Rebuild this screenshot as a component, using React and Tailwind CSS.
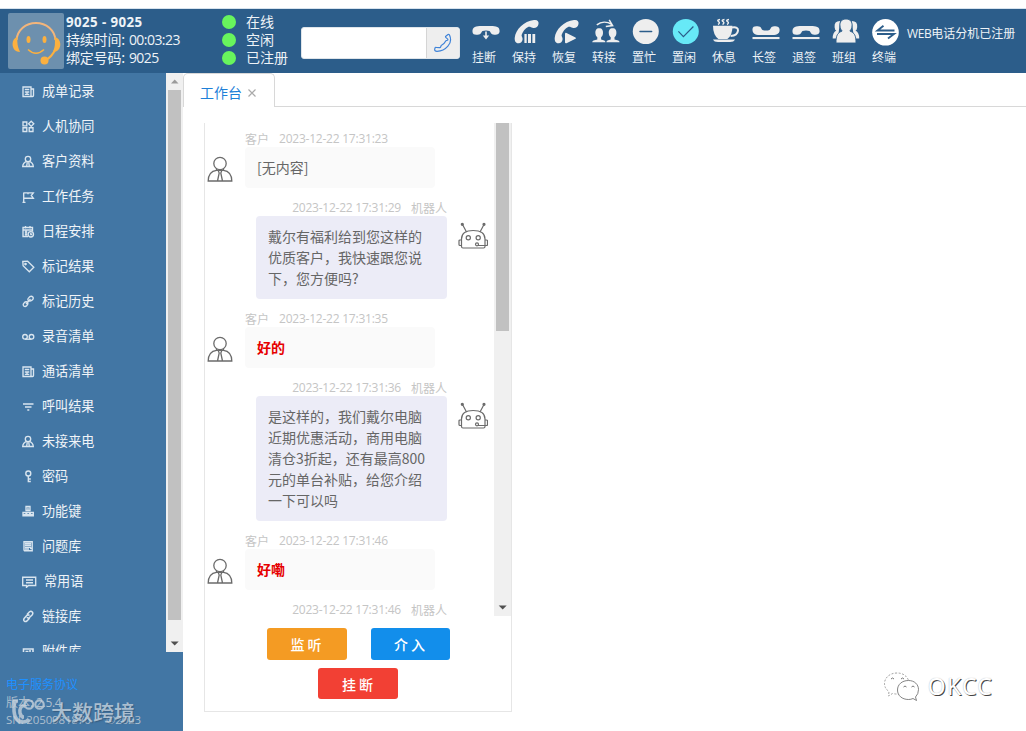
import React from "react";

const Arch = "M0.5 14 C0 7 7 8 14 8 S28 7 27.6 13.5 C27.4 16.8 24 17 21 16.4 C18.5 16 19 14 17.5 13 C15.5 12.2 12.5 12.2 10.5 13 C9 14 9.5 16 7 16.4 C4 17 0.7 17 .5 14Z";
const Receiver = "M22 2 C25.500 1.500 27 3.500 26.500 6 C26 9 23.500 10.500 20.500 9.800 C19 9.300 18 8.300 16.500 8.800 C13 10.500 10.500 14 9.600 17 C9.300 18.600 10.800 19.200 10.600 21.200 C10.300 24 8.500 25.500 6.300 25.300 C3.500 25.200 2.600 23 2.700 20 C3.500 11.500 12 3 22 2Z";

const headerIcons = {
  hangup: (
    <>
      <path d={Arch} />
      <path d="M13.2 13.5h1.6v4h2.4l-3.2 4-3.2-4h2.4z" />
    </>
  ),
  hold: (
    <>
      <path d={Receiver} />
      <path d="M12.400 16h2.300v9h-2.300zM16 16h3v9h-3zM20.400 16h2.800v9h-2.800z" />
    </>
  ),
  resume: (
    <>
      <path d={Receiver} />
      <path d="M13 15.500 Q13.200 14.500 14.500 15 L23.500 19.400 Q24.500 20 23.500 20.800 L14.500 25.200 Q13.200 25.600 13 24.600Z" />
    </>
  ),
  transfer: (
    <>
      <path d="M7.200 10.200c-3 0-4 2.100-3.800 5 .1 2 .9 3.300 1.900 4v2.200L1.500 22.500Q.3 23 .2 24.300h13.200q0-1.300-1.100-1.800L9.100 21.400v-2.200c1-.7 1.800-2 1.900-4 .2-2.900-.8-5-3.800-5z" />
      <path d="M20.600 10.200c-3 0-4 2.100-3.800 5 .1 2 .9 3.300 1.900 4v2.200l-3.200 1.100q-1.100.5-1.100 1.800h13.200q-.1-1.300-1.300-1.800l-3.800-1.100v-2.200c1-.7 1.800-2 1.900-4 .2-2.900-.8-5-3.800-5z" />
      <path d="M4.800 6.800 C9 3.600 15 3.400 20 6.600 M17.200 1.800 L20.600 7.600 L13.800 8.400" fill="none" stroke="currentColor" strokeWidth="1.5" />
    </>
  ),
  busy: (
    <>
      <ellipse cx="13.8" cy="13.5" rx="13" ry="12.6" />
      <path d="M8 13.4h11.6" stroke="#2c5d8a" strokeWidth="1.5" strokeLinecap="round" />
    </>
  ),
  idle: (
    <>
      <ellipse cx="13.8" cy="13.5" rx="13" ry="12.6" fill="#67e9f7" />
      <path d="M6.4 13.4l5 5.2L21.4 8.5" fill="none" stroke="#2c5d8a" strokeWidth="1.2" />
    </>
  ),
  rest: (
    <>
      <path d="M1 7.8h19.4q.3 9.2-5 13.2h-9Q1 17 1 7.8z" />
      <path d="M20 9.5q6.4-1 6 3.2-.6 5-7.4 5.3" fill="none" stroke="currentColor" strokeWidth="2" />
      <path d="M1 21.5h22q-1.2 2.5-5 2.5H6q-4 0-5-2.5z" />
      <path d="M8 1.500q-3.500.5-1.500 2t-.5 3M12.500 1.500q-3.500.5-1.500 2t-.5 3M17 1.500q-3.500.5-1.500 2t-.5 3" fill="none" stroke="currentColor" strokeWidth="1.5" />
    </>
  ),
  signin: (
    <>
      <path d={Arch} transform="matrix(1 0 0 -1 0 25)" />
      <path d="M.5 19h27v2.1H.5z" />
    </>
  ),
  signout: (
    <>
      <path d={Arch} />
      <path d="M.5 19h27v2.1H.5z" />
    </>
  ),
  team: (
    <>
      <path d="M8 3q-6 0-5.4 6.2.3 3 1.7 3.4Q.6 14.5.7 20.5H6zM19.8 3q6 0 5.4 6.2-.3 3-1.7 3.4 3.8 1.9 3.7 7.9H22z" />
      <path d="M14 1c-4.8 0-6.4 3.4-6 7 .2 2.4 1 4 2.200 5C5.500 15 4 17 4 25h20C24 17 22.500 15 17.800 13 19 12 19.800 10.400 20 8 20.400 4.400 18.800 1 14 1z" stroke="#2c5d8a" strokeWidth=".9" />
    </>
  ),
  terminal: (
    <>
      <circle cx="13.500" cy="14.300" r="13.300" fill="#fff" />
      <path d="M22.500 12.500H5.500l6-4.700M5 16h17l-6 4.500" fill="none" stroke="#2c5d8a" strokeWidth="1.900" />
    </>
  ),
};

const actions = [
  ["hangup", "挂断"], ["hold", "保持"], ["resume", "恢复"], ["transfer", "转接"],
  ["busy", "置忙"], ["idle", "置闲"], ["rest", "休息"], ["signin", "长签"],
  ["signout", "退签"], ["team", "班组"], ["terminal", "终端"],
];

const menuIcons = {
  record: (
    <>
      <path d="M1 2h8v9.500H1zM9 4h2.500v6.500q0 1-1 1H9" />
      <path d="M2.800 4.500h4.500M5 6.500v3.500M2.800 7h4.500M2.800 9.300h4.500" />
    </>
  ),
  blocks: (
    <path d="M1 2h3.800v3.800H1zM1 7.700h3.800v3.800H1zM7.200 7.700H11v3.800H7.200zM9.200 1.200l2.600 2.600-2.600 2.600-2.600-2.600z" />
  ),
  person: (
    <>
      <circle cx="6" cy="4" r="2.700" />
      <path d="M4.500 6.300Q1 7.800.7 11.500h10.600Q11 7.800 7.500 6.300M5.300 7.200l-.6 4M6.700 7.200l.6 4" />
    </>
  ),
  flag: <path d="M1.700 12.500V2.500M.5 12.500h3M1.700 2.800h9.600L9.300 5.500l2 2.700H1.700M6 2.800v1.500" />,
  calendar: (
    <>
      <path d="M6 11.500H1v-9h9.500v4M1 5h9.500M3.500 1v2.500M8 1v2.500M2.800 7h2.500M2.800 9.200h2.500M4 5v6" />
      <circle cx="8.800" cy="9.300" r="2.700" />
      <path d="M8.800 7.800v1.700h1.400" />
    </>
  ),
  tag: (
    <>
      <path d="M.8 1.500l4.800-.3 6.200 6-4.500 4.600-6.200-6z" />
      <circle cx="3.500" cy="4" r=".7" />
    </>
  ),
  chain: (
    <path d="M6 5.500q-.5-1.800 1-3l.8-.8q1.800-1 3 .3 1 1.300-.3 2.800Q9 6.500 7 5.800M5.500 7Q3.500 6.200 2.300 7.700q-1.800 1.800-.6 3.200 1.500 1.300 3.200-.4Q6.500 9 5.500 7zM4 9l4.500-5" />
  ),
  tape: (
    <>
      <circle cx="3" cy="6.800" r="2.300" />
      <circle cx="9.500" cy="6.800" r="2.300" />
      <path d="M3 9.200h6.500" />
    </>
  ),
  filter: <path d="M1 4h10.500M3 7h6.500M5.300 10h2" />,
  key: (
    <>
      <circle cx="6.300" cy="3.500" r="2.500" />
      <path d="M6.300 6v6.300M6.300 9H8.800M6.300 11.500H8.800" />
    </>
  ),
  keys: <path d="M4 1.500h4v4H4zM1 7.300h3v3.500H1zM4.700 7.300h3v3.500h-3zM8.300 7.300h3v3.500h-3zM6 2.500v2.300M.7 9.500h11" />,
  book: <path d="M2 1.800h8.200v9H3Q2 10.800 2 9.500zM3 3.500h6M3 5.300h6M3 7.200h6M3 9h4M8 8.500l2-.5" strokeWidth="1.400" />,
  talk: <path d="M.7 2.200h13v8.300H6.500l-2 1.800v-1.800H.7zM4 5h7M4 7.700h7" />,
  link: <path d="M5 4.500l2.500-2.700q1.500-1 2.800.2 1 1.200 0 2.700L7.500 7.500Q6 8.500 4.800 7.300M7.500 5.500Q6.200 4.300 4.700 5.500L2.300 8.300q-1.200 1.500 0 2.800 1.300 1 2.700-.2l2.700-3" strokeWidth="1.500" />,
  attach: <path d="M1.500 4h9.500v7.500H1.500zM3.500 6.500h3M8 5v3" strokeWidth="1.600" />,
};

const menu = [
  ["record", "成单记录"], ["blocks", "人机协同"], ["person", "客户资料"], ["flag", "工作任务"],
  ["calendar", "日程安排"], ["tag", "标记结果"], ["chain", "标记历史"], ["tape", "录音清单"],
  ["record", "通话清单"], ["filter", "呼叫结果"], ["person", "未接来电"], ["key", "密码"],
  ["keys", "功能键"], ["book", "问题库"], ["talk", "常用语"], ["link", "链接库"], ["attach", "附件库"],
];

const messages = [
  { who: "user", time: "2023-12-22 17:31:23", lines: ["[无内容]"] },
  { who: "bot", time: "2023-12-22 17:31:29", lines: ["戴尔有福利给到您这样的", "优质客户，我快速跟您说", "下，您方便吗?"] },
  { who: "user", time: "2023-12-22 17:31:35", lines: ["好的"], hot: true },
  { who: "bot", time: "2023-12-22 17:31:36", lines: ["是这样的，我们戴尔电脑", "近期优惠活动，商用电脑", "清仓3折起，还有最高800", "元的单台补贴，给您介绍", "一下可以吗"] },
  { who: "user", time: "2023-12-22 17:31:46", lines: ["好嘞"], hot: true },
  { who: "bot", time: "2023-12-22 17:31:46", lines: [] },
];

function Avatar() {
  return (
    <div className="h-14 w-14 shrink-0 rounded-xs bg-[#6d90ae]">
      <svg viewBox="0 0 56 56" className="h-14 w-14" fill="none" stroke="#fbb040" strokeWidth="2">
        <path d="M8.500 27C9.500 17 17.500 10 28 10s18.500 7 19.500 17" stroke="#f3b57b" />
        <path d="M9.500 24C3.500 25 2.500 36 9 38.500L12 39q-3.500-7-2.500-15zM46.500 24C53.500 25 54.500 36 48 38.500l-3 .5q3-7 1.500-15z" fill="#fbb040" stroke="none" />
        <path d="M47.500 36Q44 44 37 47.500" />
        <circle cx="36.500" cy="47.500" r="4" fill="#fbb040" stroke="none" />
        <ellipse cx="20.500" cy="26.500" rx="2" ry="3.500" fill="#fbb040" stroke="none" />
        <ellipse cx="36.500" cy="26.500" rx="2" ry="3.500" fill="#fbb040" stroke="none" />
        <path d="M20 36.500q8 7.500 16 0" strokeWidth="1.500" />
      </svg>
    </div>
  );
}

function UserIcon() {
  return (
    <svg viewBox="0 0 26 26" className="mt-[9px] h-[26px] w-[26px] shrink-0" fill="none" stroke="#6b6b6b" strokeWidth="1.300">
      <ellipse cx="13" cy="7.500" rx="6.200" ry="6.200" />
      <path d="M9.500 12.700v1.600C4 15 1.300 19 1.200 25h23.600C24.700 19 22 15 16.500 14.300v-1.600M9.500 14.300h7M11.200 14.500l1 2.500-1.700 8M14.800 14.500l-1 2.500 1.700 8" />
    </svg>
  );
}

function BotIcon() {
  return (
    <svg viewBox="0 0 30 28" className="mt-[6px] h-7 w-[30px] shrink-0" fill="none" stroke="#6b6b6b" strokeWidth="1.200">
      <path d="M4.500 2.500l4 7.500M26 2.500l-4 7.500" />
      <circle cx="4.300" cy="2.300" r="1" fill="#6b6b6b" />
      <circle cx="26" cy="2.300" r="1" fill="#6b6b6b" />
      <path d="M3.500 17C3.500 11 8 8.500 15.200 8.500S27 11 27 17v7.500q0 1.500-1.500 1.500H5q-1.500 0-1.500-1.500zM3.500 18H2q-1 0-1 1v3.500q0 1 1 1h1.500M27 18h1.500q1 0 1 1v3.500q0 1-1 1H20" />
      <circle cx="10.300" cy="15.800" r="2.100" />
      <circle cx="20.200" cy="15.800" r="2.100" />
      <circle cx="19" cy="22.300" r="1.500" />
    </svg>
  );
}

function Message({ m }) {
  const bot = m.who === "bot";
  return (
    <div className="mb-[11px]">
      <div className={"flex h-[17px] items-center gap-[10px] text-xs whitespace-nowrap text-[#c5c5c5] " + (bot ? "justify-end pr-[47px]" : "pl-[40px]")}>
        {!bot && <span className="leading-4">客户</span>}
        <span className="font-['Open_Sans'] tracking-[-0.23px]">{m.time}</span>
        {bot && <span className="leading-4">机器人</span>}
      </div>
      {m.lines.length > 0 && (
        <div className={"flex items-start " + (bot ? "gap-[11px] pl-[51px]" : "gap-3 pl-[2px]")}>
          {!bot && <UserIcon />}
          <div className={"rounded px-3 py-[10px] text-sm leading-[21px] whitespace-nowrap " + (bot ? "w-[191px] bg-[#ececf7] " : "w-[190px] bg-[#fafafa] ") + (m.hot ? "font-bold text-[#e60000]" : "text-[#666]")}>
            {m.lines.map((l) => <div key={l}>{l}</div>)}
          </div>
          {bot && <BotIcon />}
        </div>
      )}
    </div>
  );
}

function Arrow({ up, color }) {
  return (
    <svg viewBox="0 0 17 17" className="h-[17px] w-[17px] shrink-0" fill={color}>
      <path d={up ? "M5 10.500h7.500L8.700 6.500z" : "M4.700 6.500h8L8.700 10.500z"} />
    </svg>
  );
}

export default function App() {
  return (
    <div className="flex h-[731px] w-[1026px] flex-col overflow-hidden bg-white pt-2 font-['Segoe_UI','Noto_Sans_CJK_SC',sans-serif]">
      <header className="flex h-[65px] shrink-0 border-t border-[#d7e3ee] bg-[#2c5d8a] text-[#eef3f7]">
        <div className="flex w-[222px] gap-[2px] pt-1 pl-2">
          <Avatar />
          <div className="text-sm leading-[18px] whitespace-nowrap">
            <div className="h-[18px] font-['Open_Sans'] text-[13.3px] font-bold tracking-[0.42px]">9025 - 9025</div>
            <div className="flex h-[18px] gap-1 leading-4">
              <span className="tracking-[-0.2px]">持续时间:</span>
              <span className="font-['Open_Sans'] leading-[18px] tracking-[-0.55px]">00:03:23</span>
            </div>
            <div className="flex h-[18px] gap-1 leading-4">
              <span className="tracking-[-0.2px]">绑定号码:</span>
              <span className="font-['Open_Sans'] leading-[18px] tracking-[-0.55px]">9025</span>
            </div>
          </div>
        </div>
        <div className="w-[79px] pt-1 text-sm leading-4 whitespace-nowrap">
          {["在线", "空闲", "已注册"].map((s) => (
            <div key={s} className="flex h-[18px] items-start gap-[10px]">
              <span className="mt-[2px] h-[14px] w-[14px] rounded-full bg-[#68f45d]" />
              <span>{s}</span>
            </div>
          ))}
        </div>
        <div className="mt-[18px] flex h-8 w-[159px] overflow-hidden rounded-[3px] border border-[#dfe5ea] bg-white">
          <div className="flex-1" />
          <div className="flex w-[33px] items-center justify-center border-l border-[#d5d5d5] bg-[#eee]">
            <svg viewBox="0 0 20 20" className="h-5 w-5" fill="none" stroke="#3f83d8" strokeWidth="1.200">
              <path d="M12.800 3.200l2.200-1.600q.9-.5 1.500.4 2.800 6.300-1.600 11.200-4.500 5.200-11 5.100-2.500-.2-2.200-2l.3-1.300q.3-.9 1.200-.7l3.300.3q.9.200 1.200-.8l.5-1.300q3-1.300 4.700-4.700l1.500-.6q.7-.3.300-1.100l-1.900-1.700q-.6-.6 0-1.200z" strokeLinejoin="round" />
            </svg>
          </div>
        </div>
        <div className="flex pt-[9px] pl-3">
          {actions.map(([icon, label]) => (
            <div key={icon} className="w-10">
              <svg viewBox="0 0 28 28" className="h-7 w-7 text-[#eee]" fill="currentColor">{headerIcons[icon]}</svg>
              <div className="mt-[2px] text-xs leading-[18px] whitespace-nowrap">{label}</div>
            </div>
          ))}
        </div>
        <div className="-ml-[5px] pt-[15px] text-xs leading-[18px] whitespace-nowrap">
          <span className="font-['Open_Sans'] tracking-[-0.4px]">WEB</span>电话分机已注册
        </div>
      </header>

      <div className="flex min-h-0 flex-1">
        <aside className="flex w-[183px] shrink-0 flex-col bg-[#4276a4]">
          <div className="flex h-[579px] shrink-0 overflow-hidden">
            <nav className="w-[166px]">
              {menu.map(([icon, label]) => (
                <div key={label} className="flex h-[35px] items-center gap-[7px] pl-[22px] text-[13.1px] text-[#f0f4f8]">
                  <svg viewBox={icon === "talk" ? "0 0 15 13" : "0 0 13 13"} className={"mt-[2px] h-[13px] shrink-0 " + (icon === "talk" ? "w-[15px]" : "w-[13px]")} fill="none" stroke="#d9e5ef" strokeWidth="1.350">
                    {menuIcons[icon]}
                  </svg>
                  <span>{label}</span>
                </div>
              ))}
            </nav>
            <div className="flex w-[17px] flex-col bg-[#f0f0f0]">
              <Arrow up color="#9b9b9b" />
              <div className="mx-[2px] h-[530px] bg-[#c1c1c1]" />
              <div className="flex-1" />
              <Arrow color="#505050" />
            </div>
          </div>
          <div className="relative flex-1 pt-[23px] pl-[6px] text-xs leading-[18px] whitespace-nowrap text-[#aebfce]">
            <div className="h-[18px] leading-[17px] text-[#1e90ff]">电子服务协议</div>
            <div className="h-[18px] leading-[17px]">版本: <span className="font-['Open_Sans'] tracking-[-0.3px]">2.5.4</span></div>
            <div className="flex h-[18px] justify-between pr-[42px] font-['Open_Sans'] text-[11.5px] leading-[17px] tracking-[-0.15px]">
              <span>SN: 2050981870</span><span>©2023</span>
            </div>
            <div className="absolute top-[43px] left-[10px] flex items-center gap-[3px] text-[#c5d1dc] opacity-80">
              <svg viewBox="0 0 38 32" className="h-8 w-[38px]" fill="none" stroke="currentColor" strokeWidth="3.500">
                <path d="M3 6h5M4 6v10q1 11 9 11 4 0 6-3M14 10q-5 2-4 8 1 4 4 4" />
                <circle cx="19" cy="9.500" r="4.200" strokeWidth="2.200" />
                <circle cx="29.500" cy="9.500" r="4.200" strokeWidth="2.200" />
              </svg>
              <span className="text-[21px] leading-8 font-medium [text-shadow:1px_1px_1px_#36597a]">大数跨境</span>
            </div>
          </div>
        </aside>

        <main className="flex min-w-0 flex-1 flex-col">
          <div className="flex h-[34px] shrink-0">
            <div className="flex w-[92px] items-center gap-[5px] rounded-t-[5px] border border-b-0 border-[#d8d8d8] pt-[2px] pl-4 text-sm text-[#1e80d8]">
              工作台
              <svg viewBox="0 0 10 10" className="mt-[2px] h-[10px] w-[10px]" stroke="#aaa" strokeWidth="1.200"><path d="M1.500 1.500l7 7M8.500 1.500l-7 7" /></svg>
            </div>
            <div className="flex-1 border-b border-[#d8d8d8]" />
          </div>
          <div className="flex flex-1 items-start justify-between pt-4 pl-[21px]">
            <section className="flex h-[589px] w-[308px] flex-col border border-t-0 border-[#e6e6e6]">
              <div className="flex h-[493px] shrink-0 overflow-hidden">
                <div className="w-[289px] pt-[7px]">
                  {messages.map((m, i) => <Message key={i} m={m} />)}
                </div>
                <div className="flex w-[17px] flex-col bg-[#f0f0f0]">
                  <div className="mx-[2px] h-[208px] bg-[#c1c1c1]" />
                  <div className="flex-1" />
                  <Arrow color="#505050" />
                </div>
              </div>
              <div className="flex flex-wrap justify-center gap-x-6 gap-y-2 px-12 pt-3 text-sm leading-[18px] font-medium tracking-[3px] text-white">
                <div className="flex h-8 w-20 items-center justify-center rounded-[3px] bg-[#f49b23] pl-[2px]">监听</div>
                <div className="flex h-8 w-[79px] items-center justify-center rounded-[3px] bg-[#128eeb] pl-[2px]">介入</div>
                <div className="flex h-[31px] w-20 items-center justify-center rounded-[3px] bg-[#f24034] pl-[2px]">挂断</div>
              </div>
            </section>
            <div className="mt-[546px] mr-[33px] flex items-center gap-[7px]">
              <svg viewBox="0 0 38 34" className="h-[34px] w-[38px]" fill="#fff" stroke="#8b8b8b" strokeWidth=".8">
                <path d="M14 4C6.500 4 1.500 9 1.500 14.500q0 5 4.500 8L5.500 27l4-2.500q9 2 14-3 4-4.500 2.500-9Q23 4 14 4z" strokeDasharray="2 1.500" />
                <path d="M25.500 11.500c-6.500 0-11 4-11 9.500s4.500 9.500 11 9.500q2.500 0 4.500-1l3.500 2-1-3.500q3-3 3-7.500c0-5-4-9-10-9z" stroke="#666" />
                <path d="M8 10q1.500-2 3 0M18 10q1.500-2 3 0M20.500 18q1.500-2 3 0M28.500 18q1.500-2 3 0" fill="none" stroke="#555" />
              </svg>
              <span className="font-['Noto_Sans'] text-[23px] leading-[34px] font-normal tracking-[1.200px] text-white [text-shadow:1px_1px_0_#444,0_0_1px_#aaa]">OKCC</span>
            </div>
          </div>
        </main>
      </div>
    </div>
  );
}
